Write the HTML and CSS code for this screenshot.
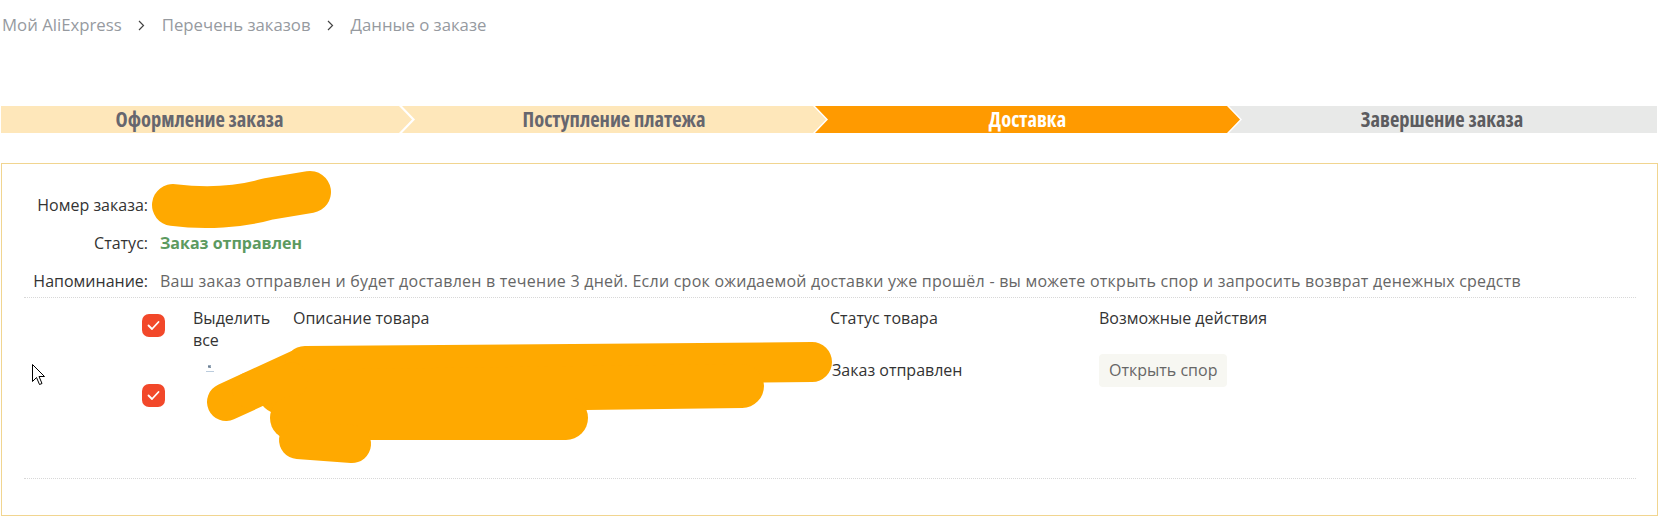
FILE: index.html
```html
<!DOCTYPE html>
<html lang="ru">
<head>
<meta charset="utf-8">
<title>Данные о заказе</title>
<link rel="stylesheet" href="styles.css">
</head>
<body>
<div class="page">
  <nav class="crumbs">
    <span class="crumb">Мой AliExpress</span>
    <svg class="sep" width="7" height="11" viewBox="0 0 7 11"><path d="M1 1 L5.5 5.5 L1 10" fill="none" stroke="#444" stroke-width="1.2"/></svg>
    <span class="crumb">Перечень заказов</span>
    <svg class="sep" width="7" height="11" viewBox="0 0 7 11"><path d="M1 1 L5.5 5.5 L1 10" fill="none" stroke="#444" stroke-width="1.2"/></svg>
    <span class="crumb">Данные о заказе</span>
  </nav>

  <div class="steps">
    <div class="step step-first done">Оформление заказа</div>
    <div class="step step-mid2 done">Поступление платежа</div>
    <div class="step step-mid3 active">Доставка</div>
    <div class="step step-last todo">Завершение заказа</div>
  </div>

  <section class="order">
    <div class="info">
      <div class="label">Номер заказа:</div>
      <div class="value">&nbsp;</div>
      <div class="label">Статус:</div>
      <div class="value status">Заказ отправлен</div>
      <div class="label">Напоминание:</div>
      <div class="value note">Ваш заказ отправлен и будет доставлен в течение 3 дней. Если срок ожидаемой доставки уже прошёл - вы можете открыть спор и запросить возврат денежных средств</div>
    </div>

    <div class="table">
      <div class="trow thead">
        <div class="cell"></div>
        <div class="cell"><span class="cb cb-head"><svg width="23" height="23" viewBox="0 0 23 23"><path d="M6.5 11.5 L10 15 L16.5 8" fill="none" stroke="#fff" stroke-width="1.8" stroke-linecap="round" stroke-linejoin="round"/></svg></span></div>
        <div class="cell selall">Выделить все</div>
        <div class="cell">Описание товара</div>
        <div class="cell">Статус товара</div>
        <div class="cell">Возможные действия</div>
      </div>
      <div class="trow item">
        <div class="cell"></div>
        <div class="cell"><span class="cb cb-item"><svg width="23" height="23" viewBox="0 0 23 23"><path d="M6.5 11.5 L10 15 L16.5 8" fill="none" stroke="#fff" stroke-width="1.8" stroke-linecap="round" stroke-linejoin="round"/></svg></span></div>
        <div class="cell product">
          <svg class="thumb" width="10" height="9" viewBox="0 0 10 9"><path d="M3 1 L6 1 L6 4 L3 4 Z" fill="#9ab" /><path d="M3.5 2 L5 3.5" stroke="#345" stroke-width="0.8"/><path d="M1 7.5 H9" stroke="#bcd" stroke-width="1"/></svg>
        </div>
        <div class="cell pstatus">Заказ отправлен</div>
        <div class="cell"><button class="btn">Открыть спор</button></div>
      </div>
    </div>
  </section>

  <svg class="redact" width="1666" height="523" viewBox="0 0 1666 523">
    <g fill="none" stroke="#ffa900" stroke-linecap="round" stroke-linejoin="round">
      <path d="M173 205 C 205 209, 240 207, 268 199 L 310 192" stroke-width="42"/>
      <path d="M226 402 L 300 368" stroke-width="38"/>
      <path d="M305 366 L 812 362" stroke-width="40"/>
      <path d="M280 392 L 742 386" stroke-width="44"/>
      <path d="M250 390 L 290 380" stroke-width="36"/>
      <path d="M292 418 L 566 418" stroke-width="44"/>
      <path d="M298 440 L 352 444" stroke-width="38"/>
    </g>
  </svg>

  <svg class="cursor" width="14" height="23" viewBox="0 0 14 23"><path d="M0.5 0.5 V17.5 L4.5 13.5 L7.5 20.5 L10 19.5 L7 12.5 H12.5 Z" fill="#fff" stroke="#000" stroke-width="1"/></svg>
</div>
</body>
</html>
```

FILE: styles.css
```css
* { box-sizing: border-box; }

html, body {
  margin: 0;
  padding: 0;
  background: #fff;
}

body {
  font-family: "Open Sans", "Noto Sans", "Liberation Sans", sans-serif;
  font-size: 16px;
  line-height: 22px;
  color: #333;
}

.page {
  position: relative;
  width: 1666px;
  height: 523px;
  overflow: hidden;
}

/* breadcrumbs */
.crumbs {
  display: flex;
  align-items: center;
  padding: 14px 0 0 2px;
  height: 36px;
  font-size: 16.75px;
  color: #969a9f;
}

.sep {
  margin: 0 17px 0 16px;
}

/* steps */
.steps {
  display: flex;
  margin: 70px 0 0 1px;
  height: 27px;
}

.step {
  height: 27px;
  line-height: 27px;
  text-align: center;
  font-family: "Open Sans", "Liberation Sans Narrow", sans-serif;
  font-stretch: 75%;
  font-weight: 700;
  font-size: 20.5px;
  color: #66666e;
  flex: none;
}

.step-first {
  width: 411px;
  padding-right: 14px;
  clip-path: polygon(0 0, calc(100% - 13px) 0, 100% 50%, calc(100% - 13px) 100%, 0 100%);
}

.step-mid2 {
  width: 424px;
  margin-left: -10px;
  clip-path: polygon(0 0, calc(100% - 13px) 0, 100% 50%, calc(100% - 13px) 100%, 0 100%, 13px 50%);
}

.step-mid3 {
  width: 425px;
  margin-left: -11px;
  clip-path: polygon(0 0, calc(100% - 13px) 0, 100% 50%, calc(100% - 13px) 100%, 0 100%, 13px 50%);
}

.step-last {
  width: 428px;
  margin-left: -11px;
  padding-right: 2px;
  clip-path: polygon(0 0, 100% 0, 100% 100%, 0 100%, 13px 50%);
}

.done { background: #fee7ba; }
.active { background: #ff9a00; color: #fff; }
.todo { background: #e8e9e8; color: #5c5c60; }

/* order box */
.order {
  margin: 30px 0 0 1px;
  width: 1657px;
  height: 353px;
  border: 1px solid #f1d590;
  padding: 30px 21px 0 22px;
}

.info {
  display: grid;
  grid-template-columns: 124px 1fr;
  column-gap: 12px;
  row-gap: 16px;
}

.label {
  text-align: right;
  color: #333;
  white-space: nowrap;
}

.value {
  color: #666;
  white-space: nowrap;
}

.status {
  color: #5c9a5f;
  font-weight: 700;
}

.note {
  letter-spacing: 0.24px;
}

.table {
  margin-top: 5px;
  border-top: 1px dotted #d8d8d8;
}

.trow {
  display: grid;
  grid-template-columns: 119px 50px 100px 537px 269px 1fr;
  align-items: start;
}

.thead {
  padding-top: 9px;
  height: 53px;
  color: #333;
}

.selall {
  width: 90px;
}

.cb {
  display: block;
  width: 23px;
  height: 23px;
  border-radius: 7px;
  background: #f2482a;
}

.cb svg { display: block; }

.cb-head { margin-top: 7px; margin-left: -1px; }
.cb-item { margin-top: 30px; margin-left: -1px; }

.item {
  padding-top: 3px;
  height: 128px;
  border-bottom: 1px dotted #d8d8d8;
}

.product {
  grid-column: 3 / span 2;
  padding-left: 12px;
}

.thumb {
  display: block;
  margin-top: 10px;
}

.pstatus {
  line-height: 33px;
  color: #333;
  padding-left: 2px;
}

.btn {
  font-family: inherit;
  font-size: 16px;
  line-height: 33px;
  height: 33px;
  padding: 0 10px;
  border: none;
  border-radius: 4px;
  background: #f7f7f2;
  color: #666;
}

/* overlays */
.redact {
  position: absolute;
  left: 0;
  top: 0;
  pointer-events: none;
}

.cursor {
  position: absolute;
  left: 32px;
  top: 364px;
}
```
